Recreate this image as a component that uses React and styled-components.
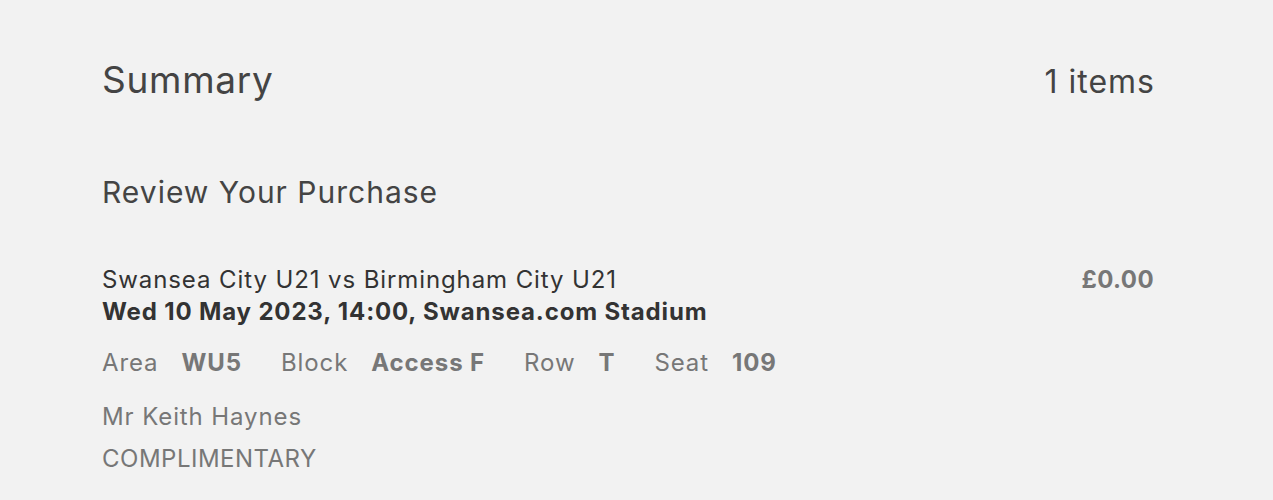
import React from "react";
import styled, { createGlobalStyle } from "styled-components";

const Global = createGlobalStyle`
  html, body { margin: 0; padding: 0; background: #f2f2f2; }
  body { font-family: Inter, "Noto Sans", sans-serif; }
`;

const Page = styled.div`
  padding: 52px 119px 20px 102px;
  color: #444;
`;

const Header = styled.div`
  display: flex;
  justify-content: space-between;
  align-items: baseline;
`;

const Title = styled.h1`
  margin: 0;
  font-size: 37px;
  font-weight: 400;
  line-height: 56px;
  letter-spacing: 0.7px;
  color: #444;
`;

const Count = styled.div`
  font-size: 32px;
  letter-spacing: 1px;
  margin-right: -1px;
  color: #444;
`;

const SubTitle = styled.h2`
  margin: 64px 0 0;
  font-size: 30px;
  font-weight: 400;
  line-height: 40px;
  letter-spacing: 1px;
  color: #444;
`;

const Item = styled.div`
  display: flex;
  justify-content: space-between;
  margin-top: 52px;
  font-size: 24px;
  line-height: 32px;
  letter-spacing: 0.9px;
`;

const Info = styled.div`
  display: flex;
  flex-direction: column;
`;

const EventName = styled.div`
  color: #333;
`;

const EventDate = styled.div`
  font-weight: 700;
  letter-spacing: 0.85px;
  color: #333;
`;

const Seating = styled.div`
  display: flex;
  margin-top: 19px;
  color: #777;
`;

const Label = styled.span`
  margin-right: 23px;
`;

const Value = styled.span`
  font-weight: 700;
  letter-spacing: 0.9px;
  margin-right: 39px;
`;

const Muted = styled.div`
  color: #777;
  letter-spacing: ${(p) => p.$spacing ?? 0.9}px;
  margin-top: ${(p) => p.$gap || 0}px;
`;

const Price = styled.div`
  font-weight: 700;
  letter-spacing: 0.4px;
  color: #777;
`;

export default function App() {
  const seats = [
    ["Area", "WU5"],
    ["Block", "Access F"],
    ["Row", "T"],
    ["Seat", "109"],
  ];
  return (
    <>
      <Global />
      <Page>
        <Header>
          <Title>Summary</Title>
          <Count>1 items</Count>
        </Header>
        <SubTitle>Review Your Purchase</SubTitle>
        <Item>
          <Info>
            <EventName>Swansea City U21 vs Birmingham City U21</EventName>
            <EventDate>Wed 10 May 2023, 14:00, Swansea.com Stadium</EventDate>
            <Seating>
              {seats.map(([l, v]) => (
                <React.Fragment key={l}>
                  <Label>{l}</Label>
                  <Value>{v}</Value>
                </React.Fragment>
              ))}
            </Seating>
            <Muted $gap={22}>Mr Keith Haynes</Muted>
            <Muted $gap={10} $spacing={0.5}>COMPLIMENTARY</Muted>
          </Info>
          <Price>£0.00</Price>
        </Item>
      </Page>
    </>
  );
}
